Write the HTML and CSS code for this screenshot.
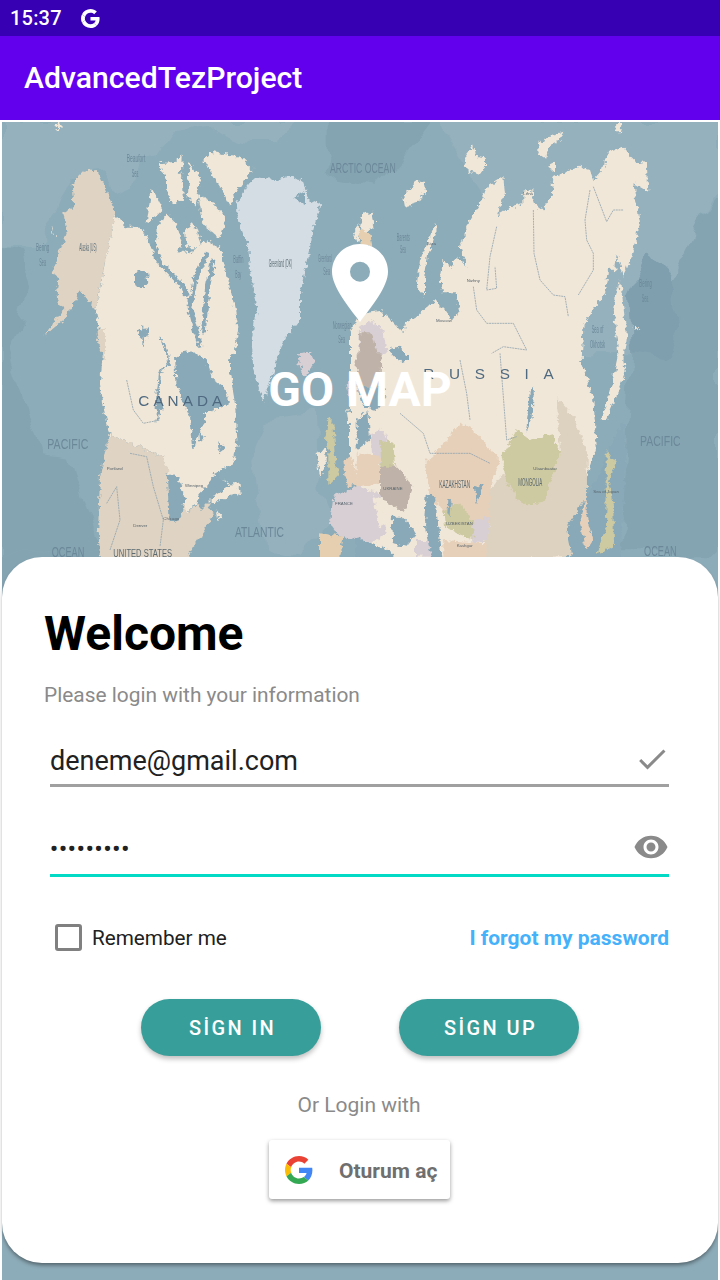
FILE: index.html
```
<!DOCTYPE html>
<html lang="en">
<head>
<meta charset="utf-8">
<title>AdvancedTezProject</title>
<link rel="stylesheet" href="styles.css">
</head>
<body>
<div class="status-bar">
  <span class="status-time">15:37</span>
  <svg class="status-g" viewBox="0 0 48 48"><path d="M24 9.5c3.54 0 6.71 1.22 9.21 3.6l6.85-6.85C35.9 2.38 30.47 0 24 0 14.62 0 6.51 5.38 2.56 13.22l7.98 6.19C12.43 13.72 17.74 9.5 24 9.5z"/><path d="M46.98 24.55c0-1.57-.15-3.09-.38-4.55H24v9.02h12.94c-.58 2.96-2.26 5.48-4.78 7.18l7.73 6c4.51-4.18 7.09-10.36 7.09-17.65z"/><path d="M10.53 28.59c-.48-1.45-.76-2.99-.76-4.59s.27-3.14.76-4.59l-7.98-6.19C.92 16.46 0 20.12 0 24c0 3.88.92 7.54 2.56 10.78l7.97-6.19z"/><path d="M24 48c6.48 0 11.93-2.13 15.89-5.81l-7.73-6c-2.15 1.45-4.92 2.3-8.16 2.3-6.26 0-11.57-4.22-13.47-9.91l-7.98 6.19C6.51 42.62 14.62 48 24 48z"/></svg>
</div>
<header class="toolbar">AdvancedTezProject</header>
<main class="screen">
  <div class="map-frame">
    <svg class="map" viewBox="6 6 2148 3474" preserveAspectRatio="none">
      <defs>
        <filter id="rough" x="-5%" y="-5%" width="110%" height="110%" color-interpolation-filters="sRGB">
          <feTurbulence type="fractalNoise" baseFrequency=".07" numOctaves="3" seed="4" result="n"/>
          <feDisplacementMap in="SourceGraphic" in2="n" scale="22" xChannelSelector="R" yChannelSelector="G"/>
        </filter>
        <filter id="wash" x="-5%" y="-5%" width="110%" height="110%" color-interpolation-filters="sRGB">
          <feTurbulence type="fractalNoise" baseFrequency=".012" numOctaves="2" seed="9" result="n"/>
          <feDisplacementMap in="SourceGraphic" in2="n" scale="70" xChannelSelector="R" yChannelSelector="G"/>
        </filter>
      </defs>
      <rect class="w0" x="0" y="0" width="2160" height="3480"/>
      <g class="wash">
        <polygon class="w1" points="0,0 900,0 830,60 740,60 640,20 520,40 480,100 420,110 400,200 330,220 300,150 220,160 170,280 100,380 0,380"/>
        <polygon class="w2" points="0,380 60,390 90,500 50,640 20,700 120,1000 210,1010 300,1300 0,1300"/>
        <polygon class="w2" points="980,0 1290,0 1200,120 1130,200 1000,180 980,90"/>
        <polygon class="w1" points="1300,0 2160,0 2160,200 2100,300 1900,700 1700,700 1500,300"/>
        <polygon class="w2" points="2160,220 2100,300 1900,700 1880,1000 1860,1300 2160,1300"/>
        <polygon class="w2" points="0,1300 300,1300 280,1700 0,1700"/>
        <polygon class="w3" points="1890,520 1950,390 2030,500 2040,640 1990,720 1900,700"/>
        <polygon class="w1" points="800,900 950,880 960,1100 1000,1200 900,1300 790,1290 760,1020"/>
      </g>

      <g class="rough">
      <!-- North America -->
      <polygon class="land" points="345,280 375,320 420,320 440,350 460,400 470,430 520,390 570,400 620,360 660,385 690,500 715,620 705,695 690,720 690,760 705,850 712,960 700,1030 640,1060 720,1110 640,1150 600,1140 560,1180 520,1110 490,1010 330,945 320,920 300,790 310,690 288,570 320,400"/>
      <polygon class="usa" points="330,945 490,1010 510,1060 540,1110 560,1180 620,1130 640,1190 580,1280 560,1320 300,1320 295,1210 300,1070 320,970"/>
      <polygon class="usa" points="215,190 250,155 290,150 320,210 345,280 320,400 300,500 288,570 240,510 220,560 190,600 130,650 190,570 170,530 175,470 155,460 170,420 200,340 190,280 220,260"/>
      <polygon class="usa" points="290,640 315,620 315,720 300,690"/>
      <polygon class="land" points="155,320 165,350 160,350"/>
      <polygon class="land" points="440,310 455,205 490,270 470,290"/>
      <polygon class="land" points="478,130 530,125 548,180 552,240 515,250 500,190"/>
      <polygon class="land" points="530,115 548,108 546,150 530,150"/>
      <polygon class="land" points="570,128 600,170 590,262 560,230"/>
      <polygon class="land" points="610,120 630,95 660,100 720,110 760,150 710,210 690,260 660,200 640,170"/>
      <polygon class="land" points="595,225 640,250 680,295 660,355 610,315"/>
      <polygon class="land" points="470,320 500,280 530,310 545,370 520,440 480,430 468,380"/>
      <polygon class="land" points="555,330 575,310 590,330 605,385 560,385"/>
      <polygon class="land" points="170,1 182,15 176,38 170,25"/>
      <polyline class="chan" points="460,370 480,430 520,470 550,500 560,530"/>
      <polyline class="chan" points="620,400 585,480 570,560 600,680"/>
      <polyline class="chan" points="640,420 620,520 610,640"/>
      <polyline class="chan thin" points="480,650 510,720 480,760 470,850"/>
      <polyline class="chan thin" points="430,620 430,680"/>
      <polygon class="lake" points="405,455 440,450 445,490 420,510 405,490"/>
      <polygon class="lake" points="525,710 560,690 590,700 620,720 640,780 670,800 690,850 620,880 580,990 570,890 530,800"/>
      <polygon class="lake" points="410,630 450,625 440,655 420,650"/>
      <polygon class="lake" points="500,1060 535,1070 555,1140 540,1200 510,1210 505,1140"/>
      <polygon class="lake" points="590,1130 650,1060 690,1100 640,1130 600,1170"/>
      <polygon class="lake" points="650,960 680,985 660,1000"/>
      <polygon class="lake" points="470,810 490,850 470,910"/>
      <polygon class="lake" points="598,935 615,950 600,965"/>
      <polygon class="land" points="690,1090 715,1090 720,1130 700,1120"/>
      <polygon class="land" points="650,1170 665,1190 655,1200"/>
      <!-- Greenland -->
      <polygon class="ice" points="710,250 740,200 760,175 830,180 870,165 910,190 925,240 960,255 940,330 920,440 900,520 900,600 860,650 840,690 790,845 760,750 755,660 770,570 750,450 745,380 715,310"/>
      <polygon class="lake" points="880,235 915,215 915,255"/>
      <!-- Western Europe -->
      <polygon class="land" points="1060,340 1075,310 1080,345 1070,370"/>
      <polygon class="lilac" points="895,700 930,695 945,730 915,770 900,740"/>
      <polygon class="olive" points="985,895 1000,910 1010,1040 1020,1060 985,1095 985,1000 975,960"/>
      <polygon class="land" points="950,1000 975,985 978,1040 960,1070"/>
      <polygon class="lilac" points="1000,1130 1090,1090 1090,1260 1020,1250 990,1210"/>
      <polygon class="tan" points="960,1240 1030,1250 1020,1320 960,1320"/>
      <polygon class="land" points="1040,870 1060,880 1060,910 1045,910"/>
      <polygon class="peach" points="1030,1020 1090,1000 1090,1090 1040,1100"/>
      <polygon class="lilac" points="1040,790 1090,770 1090,880 1050,850"/>

      <!-- Eurasia -->
      <g transform="translate(1080 0)">
        <polygon class="land" points="-30,640 0,580 60,570 90,600 130,640 135,610 170,590 190,570 225,540 255,570 280,600 300,570 290,520 250,520 240,470 250,420 275,440 290,410 320,440 300,380 330,300 370,230 380,200 430,170 435,220 410,290 450,260 490,250 490,215 520,210 520,250 545,270 575,230 580,170 620,155 660,140 690,150 700,180 730,145 740,100 790,80 830,130 860,125 865,215 820,190 840,310 820,390 800,450 790,470 770,400 765,460 745,440 735,520 700,570 670,620 665,720 660,725 670,740 700,840 710,980 680,1070 680,1130 660,1160 640,1300 600,1320 20,1320 0,1090 -30,1000"/>
        <polygon class="land" points="760,560 780,480 800,640 790,720 795,760 740,900 725,900 760,770 775,700"/>
        <polygon class="land" points="768,10 785,8 780,40 770,40"/>
        <polygon class="land" points="535,70 575,45 610,38 600,62 570,75 558,115 535,100"/>
        <polygon class="land" points="565,135 585,125 585,150 572,152"/>
        <polygon class="land" points="312,110 340,75 345,110 375,115 375,145 360,165 320,150"/>
        <polygon class="land" points="130,235 165,185 195,185 198,215 170,250 135,260"/>
        <polygon class="land" points="180,420 225,312 230,330 205,400 195,470 195,530 170,500"/>
        <polygon class="land" points="10,280 40,275 45,310 20,340 0,320"/>
        <polygon class="tan" points="0,320 30,340 40,390 0,370"/>
        <polygon class="lilac" points="0,620 30,600 70,630 80,700 -5,730"/>
        <polygon class="grey" points="0,640 35,640 60,720 60,780 0,800"/>
        <polygon class="lake" points="-10,790 30,800 60,770 80,830 50,870 10,860"/>
        <polygon class="lake" points="85,690 120,680 150,720 125,730"/>
        <polygon class="grey" points="65,700 -10,700 -10,820 20,800 60,800"/>
        <polygon class="lake" points="-10,900 25,870 30,960 -10,990"/>
        <polygon class="lilac" points="30,940 70,930 95,990 80,1040 40,1030"/>
        <polygon class="olive" points="60,960 100,965 105,1040 65,1050"/>
        <polygon class="grey" points="60,1040 110,1040 160,1100 130,1180 60,1130"/>
        <polygon class="peach" points="-10,1000 60,1010 60,1090 -10,1100"/>
        <polygon class="lilac" points="-15,1100 60,1120 80,1240 20,1280 -15,1260"/>
        <polygon class="land" points="40,1130 90,1150 100,1200 60,1220"/>
        <polygon class="lake" points="95,1190 130,1190 170,1240 140,1280 100,1270"/>
        <polygon class="lake" points="-15,1250 60,1280 100,1300 100,1320 -15,1320"/>
        <polygon class="lilac" points="165,1260 215,1260 215,1310 165,1310"/>
        <polygon class="china" points="390,1110 430,1060 490,1155 550,1150 600,1000 590,830 640,890 680,990 680,1130 660,1160 640,1310 360,1320 390,1210"/>
        <polygon class="peach" points="195,1030 270,950 300,910 340,930 420,1020 390,1110 390,1210 350,1260 270,1210 210,1120"/>
        <polygon class="olive" points="425,1010 470,930 510,960 575,940 600,1000 550,1150 490,1155 440,1090"/>
        <polygon class="olive" points="250,1170 300,1150 340,1210 345,1260 290,1240 255,1220"/>
        <polygon class="lilac" points="340,1200 390,1190 380,1260 340,1270"/>
        <polygon class="peach" points="250,1260 380,1270 380,1320 250,1320"/>
        <polygon class="lake" points="200,1120 225,1130 235,1220 245,1320 215,1320 195,1220"/>
        <polygon class="lake" points="265,1140 275,1145 272,1185 262,1180"/>
        <polygon class="lake" points="345,1100 372,1090 350,1150"/>
        <polygon class="lake" points="510,805 522,800 518,890 498,935"/>
        <polygon class="lake" points="660,1160 680,1130 720,1060 740,1000 790,900 800,1000 780,1320 640,1320 620,1220"/>
        <polygon class="olive" points="740,990 768,1030 745,1090 760,1160 762,1280 712,1300 738,1220 740,1120"/>
        <polygon class="peach" points="680,1110 680,1190 700,1260 680,1290 660,1210"/>
        <polygon class="land" points="820,615 835,630 825,632"/>
      </g>
      </g>

      <g transform="translate(1080 0)">
        <polyline class="bd" points="690,210 675,300 680,360 700,400 700,450 655,525"/>
        <polyline class="bd" points="520,270 522,400 540,480 580,525 615,530 625,590"/>
        <polyline class="bd" points="410,320 390,410 380,510 410,505 405,440"/>
        <polyline class="bd" points="700,200 740,305 760,270 790,270"/>
        <polyline class="bd" points="340,500 350,570 380,610 460,610 500,690 430,680 395,700"/>
        <polyline class="bd" points="120,880 190,940 210,1000 290,1000 330,1000 390,1030"/>
        <polyline class="bd" points="420,700 440,960 470,950"/>
        <polyline class="bd" points="300,720 320,820 330,900"/>
      </g>
      <polyline class="bd" points="380,780 400,870 430,910 480,900"/>
      <polyline class="bd" points="390,1000 440,1010 460,1100 490,1200 480,1280"/>
      <polyline class="bd" points="320,1150 350,1100 360,1200 330,1290"/>

      <g class="labels">
        <text x="990" y="160" class="lg" textLength="197" lengthAdjust="spacingAndGlyphs">ARCTIC OCEAN</text>
        <text x="142" y="988" class="lg" textLength="123" lengthAdjust="spacingAndGlyphs">PACIFIC</text>
        <text x="155" y="1310" class="lg" textLength="98" lengthAdjust="spacingAndGlyphs">OCEAN</text>
        <text x="705" y="1250" class="lg" textLength="147" lengthAdjust="spacingAndGlyphs">ATLANTIC</text>
        <text x="415" y="858" class="rus cn">CANADA</text>
        <text x="340" y="1312" class="md" textLength="176" lengthAdjust="spacingAndGlyphs">UNITED STATES</text>
        <text x="380" y="125" class="sm" textLength="56" lengthAdjust="spacingAndGlyphs">Beaufort</text>
        <text x="395" y="172" class="sm" textLength="20" lengthAdjust="spacingAndGlyphs">Sea</text>
        <text x="108" y="392" class="sm" textLength="40" lengthAdjust="spacingAndGlyphs">Bering</text>
        <text x="118" y="438" class="sm" textLength="20" lengthAdjust="spacingAndGlyphs">Sea</text>
        <text x="238" y="392" class="sm dk" textLength="52" lengthAdjust="spacingAndGlyphs">Alaska (US)</text>
        <text x="806" y="440" class="sm dk" textLength="70" lengthAdjust="spacingAndGlyphs">Greenland (DK)</text>
        <text x="700" y="430" class="sm" textLength="30" lengthAdjust="spacingAndGlyphs">Baffin</text>
        <text x="706" y="475" class="sm" textLength="18" lengthAdjust="spacingAndGlyphs">Bay</text>
        <text x="955" y="425" class="sm" textLength="40" lengthAdjust="spacingAndGlyphs">Greenland</text>
        <text x="970" y="465" class="sm" textLength="20" lengthAdjust="spacingAndGlyphs">Sea</text>
        <text x="998" y="628" class="sm" textLength="57" lengthAdjust="spacingAndGlyphs">Norwegian</text>
        <text x="1015" y="670" class="sm" textLength="20" lengthAdjust="spacingAndGlyphs">Sea</text>
        <text x="555" y="1100" class="xs">Winnipeg</text>
        <text x="320" y="1050" class="xs">Portland</text>
        <text x="400" y="1220" class="xs">Denver</text>
        <text x="490" y="1200" class="xs">Chicago</text>
        <text x="1005" y="1155" class="xs">FRANCE</text>
        <g transform="translate(1080 0)">
          <text x="840" y="978" class="lg" textLength="122" lengthAdjust="spacingAndGlyphs">PACIFIC</text>
          <text x="852" y="1308" class="lg" textLength="98" lengthAdjust="spacingAndGlyphs">OCEAN</text>
          <text x="190" y="776" class="rus">RUSSIA</text>
          <text x="475" y="1098" class="md" textLength="72" lengthAdjust="spacingAndGlyphs">MONGOLIA</text>
          <text x="238" y="1105" class="md" textLength="92" lengthAdjust="spacingAndGlyphs">KAZAKHSTAN</text>
          <text x="70" y="1110" class="xs">UKRAINE</text>
          <text x="258" y="1215" class="xs">UZBEKISTAN</text>
          <text x="110" y="362" class="sm" textLength="40" lengthAdjust="spacingAndGlyphs">Barents</text>
          <text x="120" y="400" class="sm" textLength="18" lengthAdjust="spacingAndGlyphs">Sea</text>
          <text x="200" y="375" class="xs">Kara</text>
          <text x="838" y="500" class="sm" textLength="38" lengthAdjust="spacingAndGlyphs">Bering</text>
          <text x="845" y="545" class="sm" textLength="20" lengthAdjust="spacingAndGlyphs">Sea</text>
          <text x="695" y="640" class="sm" textLength="35" lengthAdjust="spacingAndGlyphs">Sea of</text>
          <text x="690" y="685" class="sm" textLength="45" lengthAdjust="spacingAndGlyphs">Okhotsk</text>
          <text x="700" y="1120" class="xs">Sea of Japan</text>
          <text x="320" y="485" class="xs">Nizhny</text>
          <text x="228" y="605" class="xs">Moscow</text>
          <text x="520" y="1050" class="xs">Ulaanbaatar</text>
          <text x="290" y="1280" class="xs">Kashgar</text>
          <text x="490" y="225" class="xs">Lena</text>
        </g>
      </g>
    </svg>
  </div>
  <section class="hero">
    <svg class="pin" viewBox="0 0 56 78"><path fill-rule="evenodd" d="M28 0C12.5 0 0 12.3 0 27.6 0 43 16 62 28 78 40 62 56 43 56 27.6 56 12.3 43.500 0 28 0zm0 17.800a10 10 0 1 1 0 20 10 10 0 0 1 0-20z"/></svg>
    <div class="brand">GO MAP</div>
  </section>
  <section class="card">
    <h1 class="welcome">Welcome</h1>
    <p class="hint">Please login with your information</p>
    <div class="field field-email">
      <span class="field-text">deneme@gmail.com</span>
      <svg class="field-icon field-check" viewBox="0 0 24 24"><path d="M9 16.170L4.830 12l-1.420 1.410L9 19 21 7l-1.410-1.410z"/></svg>
    </div>
    <div class="field field-pass">
      <span class="dots">•••••••••</span>
      <svg class="field-icon" viewBox="0 0 24 24"><path d="M12 4.500C7 4.500 2.730 7.610 1 12c1.730 4.390 6 7.500 11 7.500s9.270-3.110 11-7.500c-1.730-4.390-6-7.500-11-7.500zM12 17c-2.760 0-5-2.240-5-5s2.240-5 5-5 5 2.240 5 5-2.240 5-5 5zm0-8c-1.660 0-3 1.340-3 3s1.340 3 3 3 3-1.340 3-3-1.340-3-3-3z"/></svg>
    </div>
    <div class="options">
      <span class="checkbox"></span>
      <span class="remember">Remember me</span>
      <span class="forgot">I forgot my password</span>
    </div>
    <div class="actions">
      <button class="pill">SİGN IN</button>
      <button class="pill">SİGN UP</button>
    </div>
    <p class="or">Or Login with</p>
    <div class="google-row">
      <button class="google">
        <svg class="google-g" viewBox="0 0 48 48"><path class="g-r" d="M24 9.500c3.540 0 6.710 1.220 9.210 3.600l6.850-6.850C35.900 2.380 30.470 0 24 0 14.620 0 6.510 5.380 2.560 13.220l7.980 6.190C12.430 13.720 17.740 9.500 24 9.500z"/><path class="g-b" d="M46.980 24.550c0-1.570-.15-3.090-.38-4.550H24v9.020h12.940c-.58 2.960-2.260 5.480-4.780 7.180l7.730 6c4.510-4.180 7.090-10.360 7.090-17.650z"/><path class="g-y" d="M10.530 28.590c-.48-1.450-.76-2.990-.76-4.590s.27-3.140.76-4.590l-7.980-6.190C.92 16.460 0 20.120 0 24c0 3.880.92 7.540 2.560 10.780l7.970-6.190z"/><path class="g-g" d="M24 48c6.480 0 11.930-2.130 15.890-5.810l-7.730-6c-2.150 1.450-4.920 2.300-8.160 2.300-6.260 0-11.570-4.220-13.470-9.910l-7.980 6.190C6.510 42.620 14.620 48 24 48z"/></svg>
        <span class="google-label">Oturum aç</span>
      </button>
    </div>
  </section>
</main>
</body>
</html>
```
FILE: styles.css
```
* { box-sizing: border-box; }
html, body { margin: 0; padding: 0; }
body { width: 720px; height: 1280px; overflow: hidden; background: #fff; font-family: Roboto, "Noto Sans", sans-serif; }

.status-bar { height: 36px; background: #3700b3; display: flex; align-items: center; padding-left: 10px; color: #fff; }
.status-time { font-size: 20px; font-weight: 500; letter-spacing: .2px; width: 71px; }
.status-g { width: 19px; height: 19px; fill: #fff; }

.toolbar { height: 84px; background: #6200ee; color: #fff; font-size: 30.200px; font-weight: 500; line-height: 84px; padding: 0 0 0 24px; }

.screen { position: relative; height: 1160px; padding: 2px; background: #fff; overflow: hidden; }
.map-frame { position: absolute; left: 2px; top: 2px; width: 716px; height: 1158px; }
.map { display: block; width: 716px; height: 1158px; filter: blur(.4px); }
.rough { filter: url(#rough); }
.wash { filter: url(#wash); }

.w0 { fill: #8dacb9; }
.w1 { fill: #95b1be; }
.w2 { fill: #85a4b2; }
.w3 { fill: #7f9fae; }
.land { fill: #f1e7d8; }
.usa { fill: #dfd3c3; }
.ice { fill: #d4dde3; }
.tan { fill: #e6cfb0; }
.peach { fill: #e6d0ba; }
.china { fill: #ddd1bf; }
.olive { fill: #cdc9a1; }
.lilac { fill: #d8cfd5; }
.grey { fill: #bfb3a9; }
.lake { fill: #89a9b8; }
.chan { fill: none; stroke: #89a9b8; stroke-width: 14; }
.chan.thin { stroke-width: 6; }
.bd { fill: none; stroke: #93a5ae; stroke-width: 2.500; stroke-dasharray: 6 2; }
.labels text { font-family: "Liberation Sans", sans-serif; fill: #6b8899; }
.labels .lg { font-size: 42px; }
.labels .rus { font-size: 46px; letter-spacing: 44px; fill: #4f6a80; }
.labels .rus.cn { letter-spacing: 12px; }
.labels .md { font-size: 30px; fill: #5b6a70; }
.labels .sm { font-size: 30px; }
.labels .sm.dk { fill: #5f6f78; }
.labels .xs { font-size: 13px; fill: #56636b; }

.hero { position: relative; height: 435px; padding-top: 122px; display: flex; flex-direction: column; align-items: center; }
.pin { width: 56px; height: 78px; fill: #fff; }
.brand { margin-top: 40px; color: #fff; font-size: 48px; font-weight: 700; line-height: 56px; }

.card { position: relative; height: 706px; background: #fff; border-radius: 40px; padding: 47px 49px 0 42px; box-shadow: 0 3px 4px -1px rgba(0,0,0,.45); }
.welcome { margin: 0; font-size: 48px; font-weight: 700; line-height: 60px; color: #000; }
.hint { margin: 19px 0 0; font-size: 20.900px; line-height: 24px; color: #8a8a8a; }

.field { margin-left: 6px; display: flex; align-items: center; justify-content: space-between; }
.field-email { height: 54px; margin-top: 26px; border-bottom: 3px solid #a0a0a0; }
.field-pass { height: 58px; margin-top: 32px; border-bottom: 3px solid #03dac5; }
.field-text { font-size: 27px; color: #212121; line-height: 40px; padding-top: 4px; }
.dots { font-size: 22px; color: #212121; letter-spacing: 1px; font-weight: 700; padding-top: 4px; }
.field-icon { width: 36px; height: 36px; margin-top: 1px; fill: #8a8a8a; }
.field-check { margin: 0 -1px 0 0; }

.options { margin: 44px 0 0 11px; display: flex; align-items: center; height: 32px; }
.checkbox { width: 27px; height: 27px; border: 3px solid #808080; border-radius: 3px; }
.remember { margin-left: 10px; font-size: 20.700px; line-height: 34px; padding-top: 1px; color: #212121; }
.forgot { margin-left: auto; font-size: 21px; line-height: 34px; padding-top: 1px; font-weight: 700; color: #45b1fb; }

.actions { margin: 46px 0 0 97px; display: flex; gap: 78px; }
.pill { width: 180px; height: 57px; border: 0; border-radius: 29px; padding: 1px 0 0 3px; background: #389e9a; color: #fff; font: 500 20px Roboto, sans-serif; letter-spacing: 2.400px; box-shadow: 0 3px 5px rgba(0,0,0,.25); }

.or { margin: 37px 0 0; padding-left: 5px; text-align: center; font-size: 21px; line-height: 24px; color: #8a8a8a; }

.google-row { margin-top: 23px; padding-left: 225px; }
.google { width: 181px; height: 59px; padding: 0 0 0 16px; border: 0; border-radius: 3px; background: #fff; display: flex; align-items: center; font: 700 21px Roboto, sans-serif; color: #6f6f6f; box-shadow: 0 2px 4px rgba(0,0,0,.4); }
.google-g { width: 28px; height: 28px; margin-right: 26px; }
.google-label { padding-top: 2px; }
.g-r { fill: #ea4335; }
.g-b { fill: #4285f4; }
.g-y { fill: #fbbc05; }
.g-g { fill: #34a853; }
```
